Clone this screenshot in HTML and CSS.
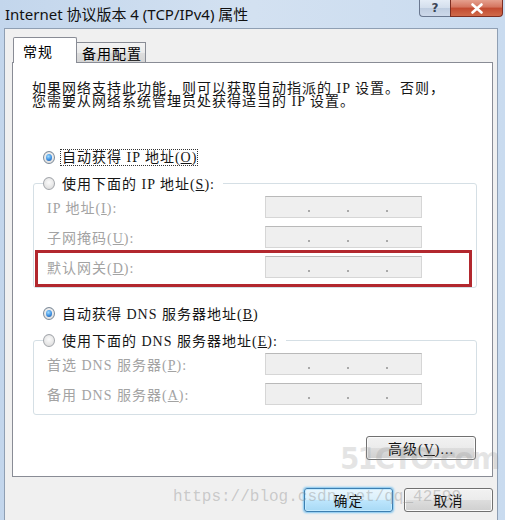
FILE: index.html
```html
<!DOCTYPE html>
<html lang="zh-CN">
<head>
<meta charset="utf-8">
<title>Internet 协议版本 4 (TCP/IPv4) 属性</title>
<link rel="stylesheet" href="styles.css">
</head>
<body>
<div class="window">
  <header class="titlebar">
    <span class="title">Internet 协议版本 4 (TCP/IPv4) 属性</span>
    <div class="caption">
      <span class="cap-btn help">?</span>
      <span class="cap-btn close"><svg width="14" height="11" viewBox="0 0 14 11"><path d="M2.5 1.5 L11.5 9.5 M11.5 1.5 L2.5 9.5" stroke="#fff" stroke-width="2.6" stroke-linecap="round"/></svg></span>
    </div>
  </header>
  <main class="client">
    <div class="tabs">
      <div class="tab active">常规</div>
      <div class="tab">备用配置</div>
    </div>
    <section class="panel">
      <p class="desc">如果网络支持此功能，则可以获取自动指派的 IP 设置。否则，<br>您需要从网络系统管理员处获得适当的 IP 设置。</p>

      <div class="radio-row first"><span class="radio checked"></span><span class="focus">自动获得 IP 地址(<u>O</u>)</span></div>
      <fieldset class="group g1">
        <legend><span class="radio-row"><span class="radio"></span><span>使用下面的 IP 地址(<u>S</u>):</span></span></legend>
        <div class="row"><span class="lbl">IP 地址(<u>I</u>):</span><span class="ipbox"><i class="seg"></i><i class="dot"></i><i class="seg2"></i><i class="dot"></i><i class="seg2"></i><i class="dot"></i></span></div>
        <div class="row"><span class="lbl">子网掩码(<u>U</u>):</span><span class="ipbox"><i class="seg"></i><i class="dot"></i><i class="seg2"></i><i class="dot"></i><i class="seg2"></i><i class="dot"></i></span></div>
        <div class="row marked"><span class="lbl">默认网关(<u>D</u>):</span><span class="ipbox"><i class="seg"></i><i class="dot"></i><i class="seg2"></i><i class="dot"></i><i class="seg2"></i><i class="dot"></i></span></div>
      </fieldset>

      <div class="radio-row dns"><span class="radio checked"></span><span>自动获得 DNS 服务器地址(<u>B</u>)</span></div>
      <fieldset class="group g2">
        <legend><span class="radio-row"><span class="radio"></span><span>使用下面的 DNS 服务器地址(<u>E</u>):</span></span></legend>
        <div class="row"><span class="lbl">首选 DNS 服务器(<u>P</u>):</span><span class="ipbox"><i class="seg"></i><i class="dot"></i><i class="seg2"></i><i class="dot"></i><i class="seg2"></i><i class="dot"></i></span></div>
        <div class="row"><span class="lbl">备用 DNS 服务器(<u>A</u>):</span><span class="ipbox"><i class="seg"></i><i class="dot"></i><i class="seg2"></i><i class="dot"></i><i class="seg2"></i><i class="dot"></i></span></div>
      </fieldset>

      <div class="adv-row"><button class="btn adv">高级(<u>V</u>)...</button></div>
    </section>
    <footer class="buttons">
      <button class="btn default">确定</button>
      <button class="btn">取消</button>
    </footer>
  </main>
  <div class="wm-51">51CTO.com</div>
  <div class="wm-url">https://blog.csdn.net/qq_42599</div>
</div>
</body>
</html>
```

FILE: styles.css
```css
* { box-sizing: border-box; }

html, body {
  margin: 0;
  padding: 0;
}

body {
  width: 505px;
  height: 520px;
  overflow: hidden;
  background: #c3d6ec;
  font-family: "Liberation Serif", "Noto Sans CJK SC", serif;
}

.window {
  position: relative;
  width: 505px;
  height: 520px;
  overflow: hidden;
  background: linear-gradient(90deg, #c3d6ec 0%, #d3e1f1 50%, #c9dbef 100%);
}

/* title bar */
.titlebar {
  height: 28px;
  display: flex;
  justify-content: space-between;
  align-items: flex-start;
}

.title {
  padding-left: 5px;
  line-height: 28px;
  font-family: "Noto Sans", "Noto Sans CJK SC", sans-serif;
  font-size: 15px;
  color: #111;
}

.caption {
  display: flex;
  margin-right: 2px;
}

.cap-btn {
  height: 17px;
  display: flex;
  align-items: center;
  justify-content: center;
  border: 1px solid #6a7890;
  border-top: 0;
}

.help {
  width: 31px;
  border-radius: 0 0 0 4px;
  border-right: 0;
  background: linear-gradient(#e4ecf6 0%, #d3deec 50%, #bfcde0 51%, #cdd9ea 100%);
  font-family: "DejaVu Sans", sans-serif;
  font-weight: bold;
  font-size: 12px;
  color: #3b4556;
}

.close {
  width: 53px;
  border-radius: 0 0 4px 0;
  background: linear-gradient(#e5a08e 0%, #d4745e 45%, #c24a30 50%, #d06a4a 100%);
  border-color: #7d2e22;
}

/* client */
.client {
  margin-left: 4px;
  width: 494px;
  height: 492px;
  border: 1px solid #8f9fb3;
  border-bottom: 0;
  background: #f0f0f0;
}

.tabs {
  display: flex;
  align-items: flex-end;
  margin-top: 8px;
  padding-left: 8px;
}

.tab {
  font-family: "Noto Sans CJK SC", sans-serif;
  font-size: 14px;
  letter-spacing: 1px;
  color: #000;
  border: 1px solid #898c95;
  border-bottom: 0;
}

.tab.active {
  position: relative;
  z-index: 1;
  width: 64px;
  height: 26px;
  margin-bottom: -1px;
  padding-left: 9px;
  line-height: 27px;
  background: #fff;
  border-radius: 2px 2px 0 0;
}

.tab:not(.active) {
  width: 69px;
  height: 20px;
  padding-left: 5px;
  line-height: 21px;
  border-left: 0;
  background: linear-gradient(#f3f3f3 0%, #ebebeb 50%, #dedede 51%, #d5d5d5 100%);
}

.panel {
  margin: 0 4px 0 7px;
  height: 415px;
  border: 1px solid #898c95;
  background: #fff;
  padding: 19px 0 0 0;
  font-size: 14px;
  letter-spacing: 1px;
  color: #151515;
}

.desc {
  margin: 0 0 0 19px;
  line-height: 13px;
  white-space: nowrap;
}

u { text-decoration: underline; text-underline-offset: 1px; }

.radio-row {
  display: flex;
  align-items: center;
  height: 18px;
  gap: 7px;
  white-space: nowrap;
}

.radio-row.first { margin: 40px 0 0 30px; }
.radio-row.dns { margin: 16px 0 0 30px; }

.radio {
  width: 12px;
  height: 13px;
  flex: none;
  border-radius: 50%;
  border: 1px solid #a3a6ab;
  background: radial-gradient(circle at 50% 40%, #fbfbfb 0%, #e6e6e6 60%, #d2d2d2 100%);
  display: flex;
  align-items: center;
  justify-content: center;
}

.radio.checked { border-color: #7d8b99; }

.radio.checked::after {
  content: "";
  width: 6px;
  height: 7px;
  border-radius: 50%;
  background: radial-gradient(circle at 40% 35%, #9fdcff 0%, #3d8fe0 55%, #1b4f99 100%);
}

.focus {
  outline: 1px dotted #333;
  outline-offset: 0;
  line-height: 15px;
  padding: 0 0 0 1px;
  margin-left: -1px;
}

.group {
  margin: 8px 15px 0 20px;
  padding: 0 0 5px 0;
  border: 1px solid #d5dfe5;
  border-radius: 3px;
  min-width: 0;
}

.group.g2 { margin-top: 9px; }

.group legend {
  margin-left: 9px;
  padding: 0 8px 0 0;
}

.row {
  position: relative;
  display: flex;
  align-items: center;
  height: 30px;
  padding-left: 13px;
  white-space: nowrap;
}

.lbl {
  width: 218px;
  color: #a3a3a3;
}

.ipbox {
  width: 157px;
  height: 22px;
  display: flex;
  align-items: flex-end;
  padding: 0 0 5px 4px;
  border: 1px solid #d6d6d6;
  border-top-color: #b9b9b9;
  background: #efefef;
}

.ipbox i { display: block; }
.ipbox .seg { width: 38px; }
.ipbox .seg2 { width: 36px; }
.ipbox .dot {
  width: 2px;
  height: 2px;
  margin-right: 1px;
  background: #a9a9a9;
}

/* red annotation rectangle over the gateway row */
.row.marked::after {
  content: "";
  position: absolute;
  top: -2px;
  bottom: -5px;
  left: 1px;
  right: 4px;
  border: 3px solid #b2282e;
  pointer-events: none;
}

.adv-row {
  display: flex;
  justify-content: flex-end;
  margin: 21px 16px 0 0;
}

.btn {
  height: 24px;
  width: 89px;
  padding: 0;
  font-family: "Liberation Serif", "Noto Sans CJK SC", serif;
  font-size: 14px;
  letter-spacing: 1px;
  color: #111;
  border: 1px solid #707070;
  border-radius: 3px;
  background: linear-gradient(#f2f2f2 0%, #ebebeb 50%, #dddddd 51%, #cfcfcf 100%);
  box-shadow: inset 0 0 0 1px #fbfbfb;
}

.btn.adv { width: 110px; }

.btn.default {
  border-color: #3c7fb1;
  background: linear-gradient(#eaf6fd 0%, #d9f0fc 50%, #bee6fd 51%, #a7d9f5 100%);
  box-shadow: 0 0 2px 1px #7cc4f0, inset 0 0 0 1px #c4ebff;
}

.buttons {
  display: flex;
  justify-content: flex-end;
  gap: 11px;
  margin-top: 11px;
  padding-right: 4px;
}

/* watermarks lying over the screenshot */
.wm-51 {
  position: absolute;
  left: 340px;
  top: 440px;
  font-family: "DejaVu Sans Condensed", "DejaVu Sans", sans-serif;
  font-weight: bold;
  font-size: 31px;
  line-height: 36px;
  letter-spacing: -2px;
  color: rgba(150, 150, 150, 0.25);
  pointer-events: none;
}

.wm-url {
  position: absolute;
  left: 173px;
  top: 488px;
  font-family: "Liberation Mono", monospace;
  font-size: 16px;
  color: rgba(140, 140, 140, 0.4);
  white-space: nowrap;
  pointer-events: none;
}
```
